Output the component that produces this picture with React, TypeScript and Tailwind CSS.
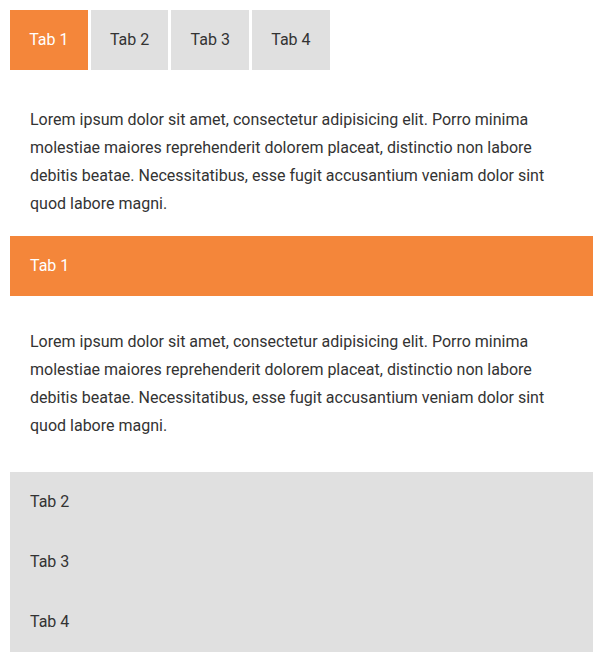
const tabs = ["Tab 1", "Tab 2", "Tab 3", "Tab 4"];

const lorem =
  "Lorem ipsum dolor sit amet, consectetur adipisicing elit. Porro minima molestiae maiores reprehenderit dolorem placeat, distinctio non labore debitis beatae. Necessitatibus, esse fugit accusantium veniam dolor sint quod labore magni.";

const App = () => {
  const active = 0;
  return (
    <div className="w-[603px] p-[10px] text-[16px] text-[#333] bg-white" style={{ fontFamily: "Roboto, sans-serif" }}>
      {/* horizontal tabs */}
      <div className="flex gap-[3px]">
        {tabs.map((t, i) => (
          <div
            key={t}
            className={`w-[77.7px] h-[60px] flex items-center justify-center ${
              i === active ? "bg-[#f4863a] text-white" : "bg-[#e0e0e0] text-[#333]"
            }`}
          >
            {t}
          </div>
        ))}
      </div>
      <p className="px-5 pt-[36px] pb-[18px] leading-[28px]">{lorem}</p>

      {/* accordion version */}
      <div className="h-[60px] flex items-center px-5 bg-[#f4863a] text-white">Tab 1</div>
      <p className="px-5 pt-[32px] pb-[32px] leading-[28px]">{lorem}</p>
      <div className="bg-[#e0e0e0]">
        {tabs.slice(1).map((t) => (
          <div key={t} className="h-[60px] flex items-center px-5">
            {t}
          </div>
        ))}
      </div>
    </div>
  );
};

export default App;
